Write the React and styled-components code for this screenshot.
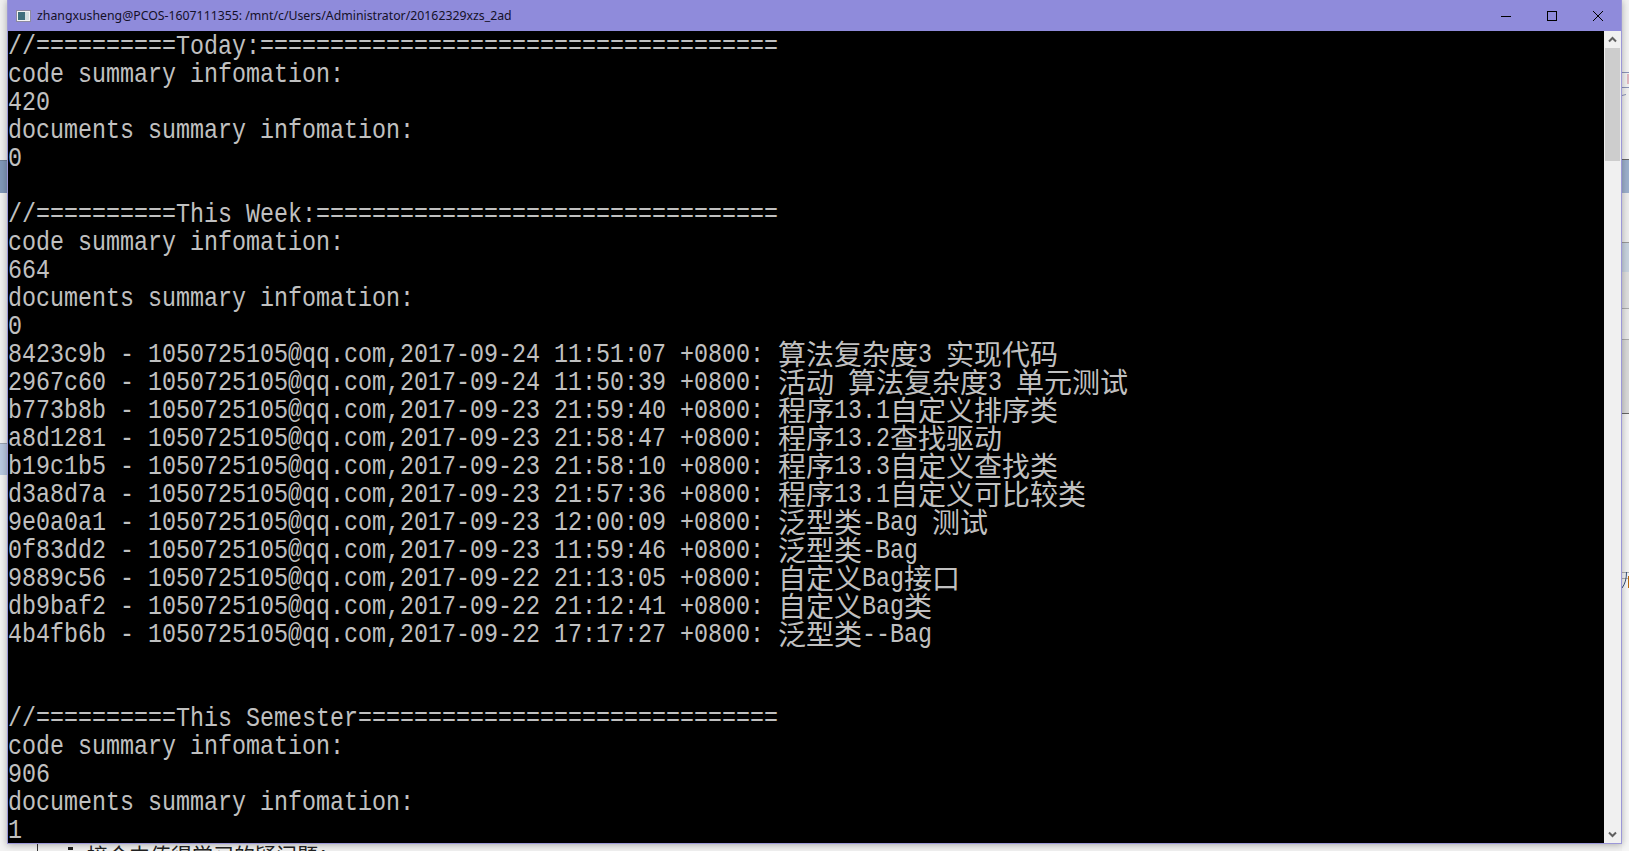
import React from 'react';
import styled, { createGlobalStyle } from 'styled-components';

const LINES = [
  '//==========Today:=====================================',
  'code summary infomation:',
  '420',
  'documents summary infomation:',
  '0',
  '',
  '//==========This Week:=================================',
  'code summary infomation:',
  '664',
  'documents summary infomation:',
  '0',
  '8423c9b - 1050725105@qq.com,2017-09-24 11:51:07 +0800: 算法复杂度3 实现代码',
  '2967c60 - 1050725105@qq.com,2017-09-24 11:50:39 +0800: 活动 算法复杂度3 单元测试',
  'b773b8b - 1050725105@qq.com,2017-09-23 21:59:40 +0800: 程序13.1自定义排序类',
  'a8d1281 - 1050725105@qq.com,2017-09-23 21:58:47 +0800: 程序13.2查找驱动',
  'b19c1b5 - 1050725105@qq.com,2017-09-23 21:58:10 +0800: 程序13.3自定义查找类',
  'd3a8d7a - 1050725105@qq.com,2017-09-23 21:57:36 +0800: 程序13.1自定义可比较类',
  '9e0a0a1 - 1050725105@qq.com,2017-09-23 12:00:09 +0800: 泛型类-Bag 测试',
  '0f83dd2 - 1050725105@qq.com,2017-09-23 11:59:46 +0800: 泛型类-Bag',
  '9889c56 - 1050725105@qq.com,2017-09-22 21:13:05 +0800: 自定义Bag接口',
  'db9baf2 - 1050725105@qq.com,2017-09-22 21:12:41 +0800: 自定义Bag类',
  '4b4fb6b - 1050725105@qq.com,2017-09-22 17:17:27 +0800: 泛型类--Bag',
  '',
  '',
  '//==========This Semester==============================',
  'code summary infomation:',
  '906',
  'documents summary infomation:',
  '1',
];

const LEFT_BANDS = [
  { h: 160, bg: '#efefef' },
  { h: 33, bg: '#8097b8', line: '#6f7f95' },
  { h: 250, bg: '#f0f0f0' },
  { h: 32, bg: '#b8c8e0', line: '#9aa3b0' },
  { h: 376, bg: '#f2f2f2' },
];

const RIGHT_BANDS = [
  { h: 72, bg: '#f2f2f2' },
  { h: 87, bg: '#f2f2f2', mark: true },
  { h: 34, bg: '#9db0cd', line: '#666666' },
  { h: 49, bg: '#ececec' },
  { h: 30, bg: '#c8d3df', line: '#999999' },
  { h: 36, bg: '#dedede' },
  { h: 31, bg: '#e8e8e8', line: '#aaaaaa' },
  { h: 74, bg: '#d9d9d9', line: '#aaaaaa' },
  { h: 159, bg: '#f3f3f3', line: '#666666' },
  { h: 279, bg: '#f6f6f6', glyph: true },
];

const GlobalStyle = createGlobalStyle`
  html, body {
    margin: 0;
    padding: 0;
    background: #f2f2f2;
    overflow: hidden;
  }
`;

const Desktop = styled.div`
  width: 1629px;
  height: 851px;
  display: flex;
  overflow: hidden;
  background: #f2f2f2;
`;

const Strip = styled.div`
  width: ${(p) => p.$width}px;
  flex: none;
  display: flex;
  flex-direction: column;
`;

const Band = styled.div`
  height: ${(p) => p.$h}px;
  flex: none;
  box-sizing: border-box;
  overflow: hidden;
  background: ${(p) => p.$bg};
  border-top: ${(p) => (p.$line ? `1px solid ${p.$line}` : 'none')};
`;

const Middle = styled.div`
  width: 1615px;
  flex: none;
  display: flex;
  flex-direction: column;
`;

const Terminal = styled.div`
  height: 844px;
  flex: none;
  z-index: 1;
  display: flex;
  flex-direction: column;
  box-sizing: border-box;
  border: 1px solid #9b97d8;
  border-top: none;
  box-shadow: 0 1px 7px rgba(0, 0, 0, 0.3);
`;

const TitleBar = styled.div`
  height: 31px;
  flex: none;
  display: flex;
  align-items: center;
  background: #8f8bdb;
  padding-left: 8px;
`;

const TitleText = styled.span`
  flex: 1;
  margin-left: 6px;
  font: 12.3px "Noto Sans", "Liberation Sans", sans-serif;
  color: #141028;
`;

const WinButton = styled.button`
  width: 46px;
  height: 31px;
  padding: 0;
  border: none;
  background: none;
  display: flex;
  align-items: center;
  justify-content: center;
`;

const Body = styled.div`
  flex: 1;
  min-height: 0;
  display: flex;
`;

const Screen = styled.div`
  flex: 1;
  background: #000;
  color: #c0c0c0;
  overflow: hidden;
`;

const Row = styled.div`
  height: 28px;
  display: flex;
  align-items: flex-start;
  white-space: pre;
  font-family: "Liberation Mono", monospace;
  font-size: 23.33px;
  line-height: 28px;
`;

// latin cells are 14px wide but tall, so the glyphs get stretched
const Latin = styled.span`
  display: block;
  transform: translateY(2px) scaleY(1.2);
`;

const Han = styled.span`
  display: block;
  font-family: "Noto Sans CJK SC", sans-serif;
  font-size: 28px;
  line-height: 28px;
`;

const Scrollbar = styled.div`
  width: 17px;
  flex: none;
  display: flex;
  flex-direction: column;
  background: #f0f0f0;
`;

const ScrollArrow = styled.div`
  height: 17px;
  flex: none;
  display: flex;
  align-items: center;
  justify-content: center;
`;

const ScrollTrack = styled.div`
  flex: 1;
`;

const ScrollThumb = styled.div`
  height: 113px;
  margin: 0 1px;
  background: #cdcdcd;
`;

const BehindDoc = styled.div`
  height: 7px;
  flex: none;
  display: flex;
  align-items: flex-start;
  overflow: hidden;
  padding-left: 30px;
  font-family: "Noto Sans CJK SC", sans-serif;
  font-size: 21px;
  line-height: 21px;
  color: #222;
  white-space: pre;
`;

const Rule = styled.div`
  width: 1px;
  height: 7px;
  flex: none;
  margin-right: 30px;
  background: #333;
`;

const Bullet = styled.div`
  width: 5px;
  height: 3px;
  flex: none;
  margin: 3px 14px 0 0;
  background: #222;
`;

const Chevron = ({ down }) => (
  <svg width="9" height="7" viewBox="0 0 9 7">
    <path
      d={down ? 'M1 1.5l3.5 3.5 3.5-3.5' : 'M1 5.5l3.5-3.5 3.5 3.5'}
      fill="none"
      stroke="#606060"
      strokeWidth="2"
    />
  </svg>
);

const splitRuns = (text) => text.split(/([\u4e00-\u9fff]+)/);

const Line = ({ text }) => (
  <Row>
    {splitRuns(text).map((run, i) =>
      i % 2 ? <Han key={i}>{run}</Han> : run && <Latin key={i}>{run}</Latin>
    )}
  </Row>
);

const RightBand = ({ h, bg, line, mark, glyph }) => (
  <Band $h={h} $bg={bg} $line={line}>
    {mark && (
      <svg width="7" height="26" viewBox="0 0 7 26">
        <path d="M0 0.5h7M0 15.5h7M0 23.5l4-1" stroke="#8c94b8" fill="none" />
        <rect x="5" y="2" width="2" height="10" fill="#e0b8c0" />
      </svg>
    )}
    {glyph && (
      <svg width="7" height="18" viewBox="0 0 7 18">
        <path d="M0 0.5h7M0 6.5h7" stroke="#b0b0b0" fill="none" />
        <path d="M4.5 0C4.5 7 3 12 0 16" stroke="#36507a" fill="none" />
        <rect x="6" y="4" width="1" height="12" fill="#b86a10" />
      </svg>
    )}
  </Band>
);

const App = () => {
  return (
    <Desktop>
      <GlobalStyle />
      <Strip $width={7}>
        {LEFT_BANDS.map((b, i) => (
          <Band key={i} $h={b.h} $bg={b.bg} $line={b.line} />
        ))}
      </Strip>
      <Middle>
        <Terminal>
          <TitleBar>
            <svg width="15" height="12" viewBox="0 0 15 12">
              <rect x="0.5" y="0.5" width="14" height="11" fill="#f4f4f4" stroke="#8d8aa0" />
              <rect x="2" y="2" width="7" height="8" fill="#3f6f7c" />
              <rect x="9" y="2" width="4" height="8" fill="#d4dfe0" />
            </svg>
            <TitleText>zhangxusheng@PCOS-1607111355: /mnt/c/Users/Administrator/20162329xzs_2ad</TitleText>
            <WinButton>
              <svg width="10" height="10" viewBox="0 0 10 10">
                <path d="M0 5.5h10" stroke="#000" />
              </svg>
            </WinButton>
            <WinButton>
              <svg width="10" height="10" viewBox="0 0 10 10">
                <rect x="0.5" y="0.5" width="9" height="9" fill="none" stroke="#000" />
              </svg>
            </WinButton>
            <WinButton>
              <svg width="10" height="10" viewBox="0 0 10 10">
                <path d="M0 0l10 10M10 0L0 10" stroke="#000" />
              </svg>
            </WinButton>
          </TitleBar>
          <Body>
            <Screen>
              {LINES.map((text, i) => (
                <Line key={i} text={text} />
              ))}
            </Screen>
            <Scrollbar>
              <ScrollArrow>
                <Chevron />
              </ScrollArrow>
              <ScrollTrack>
                <ScrollThumb />
              </ScrollTrack>
              <ScrollArrow>
                <Chevron down />
              </ScrollArrow>
            </Scrollbar>
          </Body>
        </Terminal>
        <BehindDoc>
          <Rule />
          <Bullet />
          接合中值得学习的疑问题：
        </BehindDoc>
      </Middle>
      <Strip $width={7}>
        {RIGHT_BANDS.map((b, i) => (
          <RightBand key={i} {...b} />
        ))}
      </Strip>
    </Desktop>
  );
};

export default App;
